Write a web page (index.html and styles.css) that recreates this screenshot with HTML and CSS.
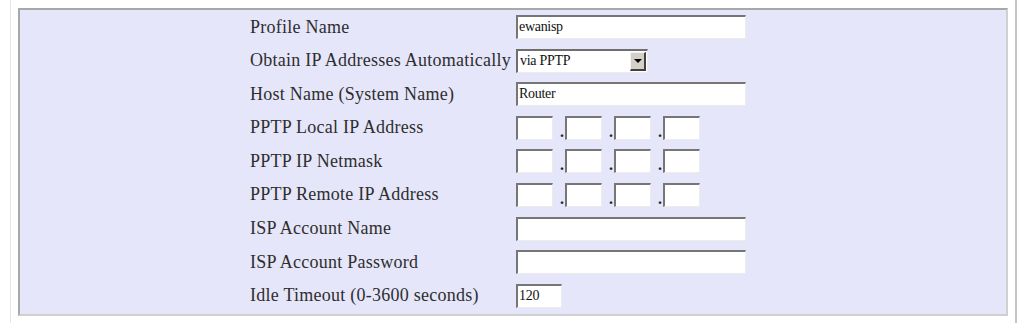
FILE: index.html
```html
<!DOCTYPE html>
<html>
<head>
<meta charset="utf-8">
<link rel="stylesheet" href="styles.css">
</head>
<body>
<div class="frame">
  <div class="panel">
    <div class="form">
      <div class="label">Profile Name</div>
      <div class="field"><div class="input wide">ewanisp</div></div>

      <div class="label">Obtain IP Addresses Automatically</div>
      <div class="field">
        <div class="select"><span class="sel-text">via PPTP</span><span class="sel-btn"><span class="arrow"></span></span></div>
      </div>

      <div class="label">Host Name (System Name)</div>
      <div class="field"><div class="input wide">Router</div></div>

      <div class="label">PPTP Local IP Address</div>
      <div class="field ip"><div class="input oct"></div><span class="dot">.</span><div class="input oct"></div><span class="dot">.</span><div class="input oct"></div><span class="dot">.</span><div class="input oct"></div></div>

      <div class="label">PPTP IP Netmask</div>
      <div class="field ip"><div class="input oct"></div><span class="dot">.</span><div class="input oct"></div><span class="dot">.</span><div class="input oct"></div><span class="dot">.</span><div class="input oct"></div></div>

      <div class="label">PPTP Remote IP Address</div>
      <div class="field ip"><div class="input oct"></div><span class="dot">.</span><div class="input oct"></div><span class="dot">.</span><div class="input oct"></div><span class="dot">.</span><div class="input oct"></div></div>

      <div class="label">ISP Account Name</div>
      <div class="field"><div class="input wide"></div></div>

      <div class="label">ISP Account Password</div>
      <div class="field"><div class="input wide"></div></div>

      <div class="label">Idle Timeout (0-3600 seconds)</div>
      <div class="field"><div class="input short">120</div></div>
    </div>
  </div>
</div>
</body>
</html>
```

FILE: styles.css
```css
html, body {
  margin: 0;
  padding: 0;
  background: #ffffff;
}

.frame {
  margin-left: 10px;
  width: 1007px;
  height: 323px;
  box-sizing: border-box;
  border-left: 1px solid #e6e6e6;
  border-right: 2px solid #c6c6c6;
  padding-top: 8px;
}

.panel {
  margin-left: 7px;
  width: 990px;
  height: 308px;
  box-sizing: border-box;
  background: #e6e6fa;
  border-top: 2px solid #a8a8a8;
  border-left: 2px solid #a8a8a8;
  border-right: 2px solid #d0d0d0;
  border-bottom: 2px solid #d0d0d0;
}

.form {
  display: grid;
  grid-template-columns: 266px auto;
  grid-auto-rows: 24px;
  row-gap: 9.6px;
  margin-left: 230px;
  padding-top: 5px;
}

.label {
  display: flex;
  align-items: center;
  font-family: "Liberation Serif", "Times New Roman", serif;
  font-size: 18px;
  letter-spacing: 0.25px;
  color: #2e2e2e;
  white-space: nowrap;
}

.field {
  display: flex;
  align-items: stretch;
}

.input {
  box-sizing: border-box;
  height: 24px;
  background: #ffffff;
  border-style: solid;
  border-width: 2px 1px 1px 2px;
  border-color: #767676 #ececec #ececec #767676;
  font-family: "Liberation Serif", "Times New Roman", serif;
  font-size: 14px;
  letter-spacing: -0.3px;
  color: #111;
  line-height: 20px;
  padding-left: 1px;
}

.wide { width: 230px; }
.short { width: 46px; }
.oct { width: 37px; }

.dot {
  width: 12px;
  display: flex;
  align-items: flex-end;
  justify-content: flex-end;
  padding-right: 1px;
  box-sizing: border-box;
  font-family: "Liberation Serif", serif;
  font-size: 16px;
  font-weight: bold;
  line-height: 16px;
  color: #222;
}

.select {
  box-sizing: border-box;
  width: 132px;
  height: 24px;
  background: #ffffff;
  border-style: solid;
  border-width: 2px 1px 1px 2px;
  border-color: #6e6e6e #ececec #ececec #6e6e6e;
  display: flex;
  align-items: stretch;
  font-family: "Liberation Serif", "Times New Roman", serif;
  font-size: 14px;
  letter-spacing: -0.3px;
  color: #111;
}

.sel-text {
  flex: 1;
  line-height: 20px;
  padding-left: 2px;
}

.sel-btn {
  width: 16px;
  margin: 1px 1px 1px 0;
  box-sizing: border-box;
  background: #d4d0c8;
  border-style: solid;
  border-width: 1px 2px 2px 1px;
  border-color: #f4f4f4 #404040 #404040 #f4f4f4;
  display: flex;
  align-items: center;
  justify-content: center;
}

.arrow {
  width: 0;
  height: 0;
  border-left: 4px solid transparent;
  border-right: 4px solid transparent;
  border-top: 4px solid #000;
}
```
